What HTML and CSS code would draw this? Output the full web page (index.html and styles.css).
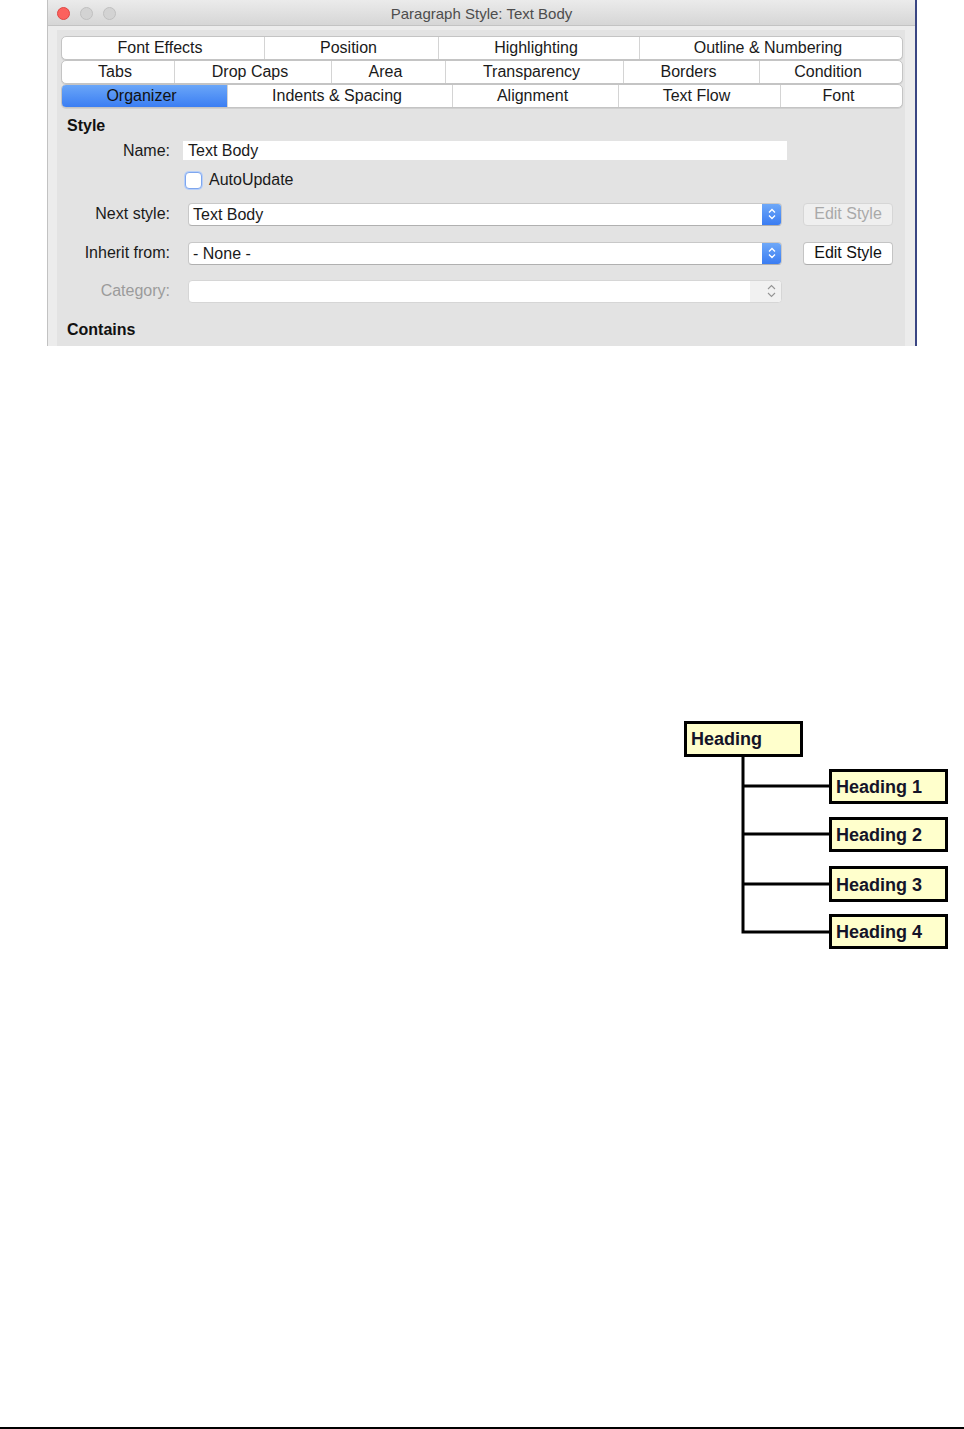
FILE: index.html
```html
<html lang="en">
<head>
    <meta charset="UTF-8">
    <title>Paragraph Style: Text Body</title>
    <link rel="stylesheet" href="styles.css">
</head>
<body>
<div class="page">
    <div class="window">
        <div class="titlebar">
            <div class="lights">
                <span class="light red"></span>
                <span class="light"></span>
                <span class="light"></span>
            </div>
            <div class="title">Paragraph Style: Text Body</div>
        </div>
        <div class="panel">
            <div class="tabs">
                <div class="tabrow row1">
                    <div class="tab">Font Effects</div>
                    <div class="tab">Position</div>
                    <div class="tab">Highlighting</div>
                    <div class="tab">Outline &amp; Numbering</div>
                </div>
                <div class="tabrow row2">
                    <div class="tab">Tabs</div>
                    <div class="tab">Drop Caps</div>
                    <div class="tab">Area</div>
                    <div class="tab">Transparency</div>
                    <div class="tab">Borders</div>
                    <div class="tab">Condition</div>
                </div>
                <div class="tabrow row3">
                    <div class="tab active">Organizer</div>
                    <div class="tab">Indents &amp; Spacing</div>
                    <div class="tab">Alignment</div>
                    <div class="tab">Text Flow</div>
                    <div class="tab">Font</div>
                </div>
            </div>

            <div class="section">Style</div>
            <div class="row name-row">
                <label class="lbl">Name:</label>
                <div class="textfield">Text Body</div>
            </div>
            <div class="row check-row">
                <span class="checkbox"></span>
                <span>AutoUpdate</span>
            </div>
            <div class="row select-row next-row">
                <label class="lbl">Next style:</label>
                <div class="select">
                    <span class="value">Text Body</span>
                    <span class="stepper">
                        <svg width="8" height="12" viewBox="0 0 8 12"><path d="M1 4.5 L4 1.5 L7 4.5 M1 7.5 L4 10.5 L7 7.5" fill="none" stroke="#fff" stroke-width="1.3"/></svg>
                    </span>
                </div>
                <button class="btn" disabled>Edit Style</button>
            </div>
            <div class="row select-row inherit-row">
                <label class="lbl">Inherit from:</label>
                <div class="select">
                    <span class="value">- None -</span>
                    <span class="stepper">
                        <svg width="8" height="12" viewBox="0 0 8 12"><path d="M1 4.5 L4 1.5 L7 4.5 M1 7.5 L4 10.5 L7 7.5" fill="none" stroke="#fff" stroke-width="1.3"/></svg>
                    </span>
                </div>
                <button class="btn">Edit Style</button>
            </div>
            <div class="row select-row category-row">
                <label class="lbl dim">Category:</label>
                <div class="select combo">
                    <span class="value"></span>
                    <span class="stepper plain">
                        <svg width="9" height="14" viewBox="0 0 9 14"><path d="M1 5 L4.5 1.5 L8 5 M1 9 L4.5 12.5 L8 9" fill="none" stroke="#959595" stroke-width="1.1"/></svg>
                    </span>
                </div>
            </div>
            <div class="section contains">Contains</div>
        </div>
    </div>

    <div class="diagram">
        <svg width="272" height="236" viewBox="0 0 272 236">
            <g stroke="#000" stroke-width="3" fill="none">
                <path d="M63 39 V215.5 M63 68 H150 M63 116 H150 M63 166 H150 M61.5 214 H150"/>
            </g>
            <g stroke="#000" stroke-width="3" fill="#ffffcc">
                <rect x="5.5" y="4.5" width="116" height="33"/>
                <rect x="150.5" y="52.5" width="116" height="32"/>
                <rect x="150.5" y="100.5" width="116" height="32"/>
                <rect x="150.5" y="149.5" width="116" height="33"/>
                <rect x="150.5" y="197.5" width="116" height="32"/>
            </g>
            <g class="node-text">
                <text x="11" y="27">Heading</text>
                <text x="156" y="75">Heading 1</text>
                <text x="156" y="123">Heading 2</text>
                <text x="156" y="172.5">Heading 3</text>
                <text x="156" y="220">Heading 4</text>
            </g>
        </svg>
    </div>

    <div class="rule"></div>
</div>
</body>
</html>
```

FILE: styles.css
```css
html, body {
    margin: 0;
    padding: 0;
    background: #fff;
    overflow: hidden;
}
body {
    font-family: "Liberation Sans", Arial, sans-serif;
    font-size: 16px;
    color: #1a1a1a;
}
.page {
    height: 1429px;
    display: flex;
    flex-direction: column;
}

/* dialog window */
.window {
    margin-left: 47px;
    width: 870px;
    height: 346px;
    box-sizing: border-box;
    border-left: 1px solid #c2c2c2;
    border-right: 2px solid #3a4683;
    background: #ececec;
    overflow: hidden;
    flex-shrink: 0;
}
.titlebar {
    height: 25px;
    border-bottom: 1px solid #c3c3c3;
    border-top-right-radius: 5px;
    background: linear-gradient(#ebebeb, #d6d6d6);
    display: flex;
    align-items: center;
    position: relative;
}
.lights {
    display: flex;
    gap: 10px;
    margin-left: 9px;
    padding-top: 1px;
}
.light {
    width: 11px;
    height: 11px;
    border-radius: 50%;
    background: #d3d3d3;
    border: 1px solid #c0c0c0;
}
.light.red {
    background: #fc615d;
    border-color: #df4744;
}
.title {
    position: absolute;
    left: 0;
    right: 0;
    top: 5px;
    text-align: center;
    font-size: 15px;
    color: #4d4d4d;
}

.panel {
    margin: 4px 0 0 9px;
    width: 848px;
    height: 320px;
    background: #e3e3e3;
    padding-top: 6px;
    box-sizing: border-box;
}

/* tabs */
.tabs {
    margin-left: 4px;
    width: 842px;
}
.tabrow {
    display: grid;
    height: 24px;
    background: #fff;
    border: 1px solid #c4c4c4;
    border-radius: 5px;
    box-sizing: border-box;
    box-shadow: 0 1px 0 #d0d0d0;
    overflow: hidden;
}
.row1 { grid-template-columns: 202px 174px 201px 1fr; }
.row2 { grid-template-columns: 112px 157px 114px 178px 136px 1fr; }
.row3 { grid-template-columns: 165px 225px 166px 162px 1fr; }
.tab {
    text-align: center;
    line-height: 22px;
    padding-right: 6px;
    border-left: 1px solid #d4d4d4;
    white-space: nowrap;
}
.tab:first-child {
    border-left: none;
}
.tab.active {
    background: linear-gradient(#6aa6f8, #3b7ef3);
    color: #111;
}

/* form */
.section {
    margin: 9px 0 0 10px;
    font-weight: bold;
    line-height: 18px;
    color: #111;
}
.section.contains {
    margin-top: 18px;
}
.row {
    display: flex;
    align-items: center;
}
.lbl {
    width: 103px;
    padding-left: 10px;
    text-align: right;
    flex-shrink: 0;
}
.lbl.dim {
    color: #9b9b9b;
}
.name-row {
    margin-top: 6px;
    height: 19px;
}
.textfield {
    margin-left: 13px;
    width: 604px;
    height: 19px;
    line-height: 19px;
    background: #fff;
    padding-left: 5px;
    box-sizing: border-box;
}
.check-row {
    margin-top: 10px;
    height: 20px;
    padding-left: 128px;
    gap: 7px;
}
.checkbox {
    width: 15px;
    height: 15px;
    border-radius: 4px;
    background: #fff;
    border: 1px solid #7ea6ee;
    box-shadow: 0 0 0 1px #b7cff8;
}
.select-row {
    height: 24px;
}
.next-row { margin-top: 12px; }
.inherit-row { margin-top: 15px; }
.category-row { margin-top: 14px; }
.select {
    margin-left: 18px;
    width: 594px;
    height: 23px;
    display: flex;
    background: #fff;
    border: 1px solid #c8c8c8;
    border-bottom-color: #b0b0b0;
    border-radius: 4px;
    box-sizing: border-box;
    overflow: hidden;
}
.select .value {
    flex: 1;
    padding-left: 4px;
    line-height: 21px;
}
.stepper {
    width: 19px;
    display: flex;
    align-items: center;
    justify-content: center;
    background: linear-gradient(#6ea8f8, #3a7cf2);
}
.select.combo {
    border-color: #d6d6d6;
}
.stepper.plain {
    width: 31px;
    justify-content: flex-end;
    padding-right: 5px;
    box-sizing: border-box;
    background: #f1f1f1;
}
.btn {
    margin-left: 21px;
    width: 90px;
    height: 23px;
    padding: 0;
    font-family: "Liberation Sans", Arial, sans-serif;
    font-size: 16px;
    color: #111;
    background: #fff;
    border: 1px solid #c4c4c4;
    border-bottom-color: #adadad;
    border-radius: 4px;
}
.btn:disabled {
    color: #a9a9a9;
    background: #efefef;
    border-color: #d6d6d6;
}

/* outline diagram */
.diagram {
    margin: 372px 0 0 680px;
    height: 236px;
}
.diagram svg {
    display: block;
}
.node-text text {
    font-family: "Liberation Sans", Arial, sans-serif;
    font-size: 18px;
    font-weight: bold;
    fill: #141428;
}

.rule {
    margin-top: auto;
    height: 2px;
    background: #000;
}
```
